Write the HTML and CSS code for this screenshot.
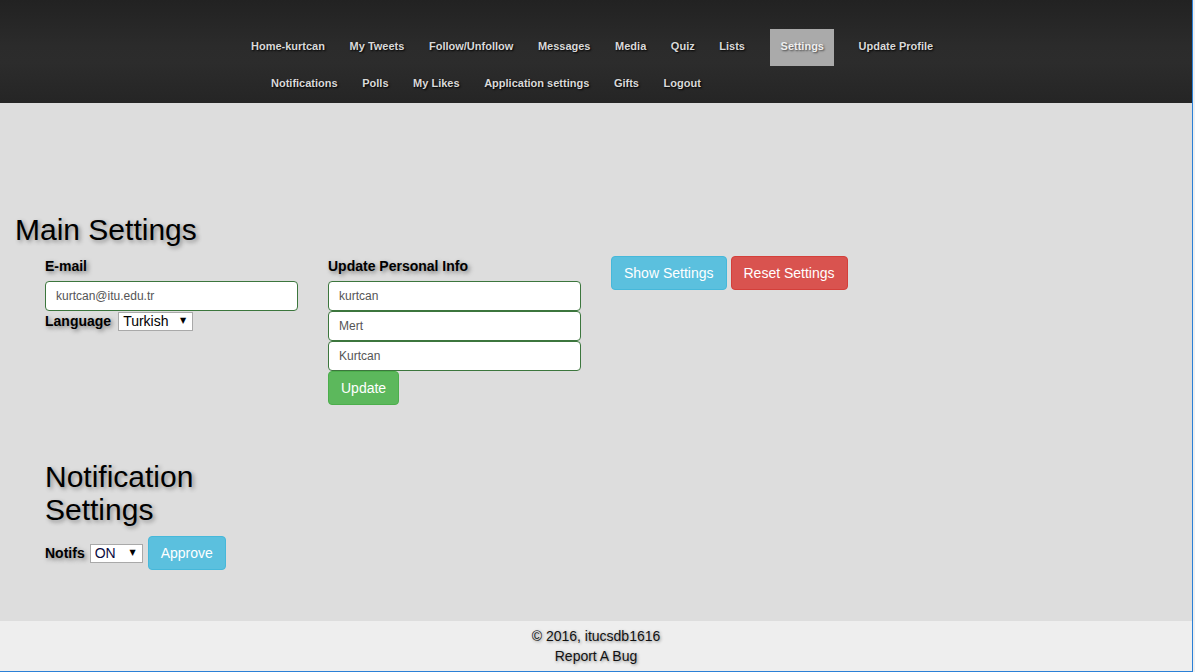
FILE: index.html
```html
<!DOCTYPE html>
<html lang="en">
<head>
<meta charset="utf-8">
<title>Settings</title>
<link rel="stylesheet" href="styles.css">
</head>
<body>
<div class="page">
  <header class="topbar">
    <nav class="nav">
      <ul class="nav-row nav-row-1">
        <li><a href="#">Home-kurtcan</a></li>
        <li><a href="#">My Tweets</a></li>
        <li><a href="#">Follow/Unfollow</a></li>
        <li><a href="#">Messages</a></li>
        <li><a href="#">Media</a></li>
        <li><a href="#">Quiz</a></li>
        <li><a href="#">Lists</a></li>
        <li class="active"><a href="#">Settings</a></li>
        <li><a href="#">Update Profile</a></li>
      </ul>
      <ul class="nav-row nav-row-2">
        <li><a href="#">Notifications</a></li>
        <li><a href="#">Polls</a></li>
        <li><a href="#">My Likes</a></li>
        <li><a href="#">Application settings</a></li>
        <li><a href="#">Gifts</a></li>
        <li><a href="#">Logout</a></li>
      </ul>
    </nav>
  </header>

  <main class="content">
    <h2 class="title">Main Settings</h2>
    <div class="settings-row">
      <div class="col">
        <label class="field-label">E-mail</label>
        <input class="text-input" type="text" value="kurtcan@itu.edu.tr">
        <div class="inline-line">
          <span class="field-label inline">Language</span>
          <span class="select-wrap select-lang"><select class="select"><option>Turkish</option></select></span>
        </div>
      </div>
      <div class="col">
        <label class="field-label">Update Personal Info</label>
        <input class="text-input" type="text" value="kurtcan">
        <input class="text-input" type="text" value="Mert">
        <input class="text-input" type="text" value="Kurtcan">
        <button class="btn btn-success">Update</button>
      </div>
      <div class="col col-buttons">
        <button class="btn btn-info">Show Settings</button>
        <button class="btn btn-danger">Reset Settings</button>
      </div>
    </div>

    <section class="notif">
      <h2 class="title notif-title">Notification Settings</h2>
      <div class="inline-line notif-line">
        <span class="field-label inline">Notifs</span>
        <span class="select-wrap select-on"><select class="select"><option>ON</option></select></span>
        <button class="btn btn-info">Approve</button>
      </div>
    </section>
  </main>

  <footer class="footer">
    <div class="footer-line">© 2016, itucsdb1616</div>
    <div class="footer-line"><a href="#" class="footer-link">Report A Bug</a></div>
  </footer>
</div>
</body>
</html>
```

FILE: styles.css
```css
* { box-sizing: border-box; }

html, body {
  margin: 0;
  padding: 0;
  background: #f0f0f0;
  font-family: "Liberation Sans", Arial, sans-serif;
}

.page {
  width: 1193px;
  height: 672px;
  border-right: 1px solid #2b80d6;
  border-bottom: 1px solid #2b80d6;
  display: flex;
  flex-direction: column;
  background: #dddddd;
  overflow: hidden;
}

/* ---------- top bar ---------- */
.topbar {
  height: 103px;
  padding-top: 29px;
  background: linear-gradient(to bottom, #222222 0%, #2b2b2b 45%, #2c2c2c 60%, #252525 100%);
  flex: none;
}

.nav-row {
  list-style: none;
  margin: 0;
  padding: 0;
  display: flex;
  height: 37px;
  gap: 4.6px;
}

.nav-row-1 { margin-left: 241px; }
.nav-row-2 { margin-left: 261px; }

.nav-row li { display: flex; }

.nav-row a {
  display: flex;
  align-items: center;
  padding: 0 10px 3px;
  font-size: 11px;
  font-weight: bold;
  color: #d9d9d9;
  text-decoration: none;
  text-shadow: 1px 1px 2px #000;
}

.nav-row li.active {
  margin: 0 9.5px 0 10.5px;
}

.nav-row li.active a {
  padding: 0 10.5px 3px;
  background: #aaaaaa;
  color: #eeeeee;
  text-shadow: 1px 1px 2px #444;
}

/* ---------- content ---------- */
.content {
  flex: 1;
  padding: 90px 15px 0;
  background: #dddddd;
}

.title {
  margin: 20px 0 10px;
  font-size: 30px;
  font-weight: normal;
  line-height: 33px;
  color: #000;
  text-shadow: 2px 2px 4px #888;
}

.settings-row {
  display: flex;
  padding-left: 15px;
}

.col {
  width: 283px;
  padding: 0 15px;
  display: flex;
  flex-direction: column;
  align-items: flex-start;
}

.col-buttons {
  flex-direction: row;
  gap: 4px;
}

.field-label {
  display: block;
  font-size: 14px;
  font-weight: bold;
  line-height: 20px;
  margin-bottom: 5px;
  color: #000;
  text-shadow: 2px 2px 4px #777;
}

.field-label.inline {
  margin-bottom: 0;
}

.text-input {
  display: block;
  width: 253px;
  height: 30px;
  margin: 0;
  padding: 0 10px;
  font-family: "Liberation Sans", Arial, sans-serif;
  font-size: 12px;
  color: #555;
  background: #fff;
  border: 1px solid #3c763d;
  border-radius: 4px;
  outline: none;
}

.inline-line {
  display: flex;
  align-items: center;
  height: 20px;
  gap: 5px;
}

.select-wrap {
  position: relative;
  display: inline-block;
  height: 19px;
}

.select-lang { width: 75px; margin-left: 2px; }
.select-on { width: 53px; }

.select {
  -webkit-appearance: none;
  appearance: none;
  width: 100%;
  height: 19px;
  margin: 0;
  padding: 0 0 0 4px;
  font-family: "Liberation Sans", Arial, sans-serif;
  font-size: 14px;
  line-height: 17px;
  color: #000;
  background: #fff;
  border: 1px solid #a9a9a9;
  border-radius: 0;
  outline: none;
}

.select-on .select { color: #0a0a40; }

.select-wrap::after {
  content: "\25BC";
  position: absolute;
  right: 7px;
  top: 4px;
  font-family: "DejaVu Sans", sans-serif;
  font-size: 8px;
  line-height: 10px;
  color: #000;
  pointer-events: none;
}

.btn {
  display: inline-block;
  height: 34px;
  padding: 6px 12px;
  font-family: "Liberation Sans", Arial, sans-serif;
  font-size: 14px;
  line-height: 20px;
  color: #fff;
  border: 1px solid transparent;
  border-radius: 4px;
  cursor: pointer;
  white-space: nowrap;
}

.btn-success { background: #5cb85c; border-color: #4cae4c; }
.btn-info { background: #5bc0de; border-color: #46b8da; }
.btn-danger { background: #d9534f; border-color: #d43f3a; }

.notif {
  padding-top: 35px;
  padding-left: 30px;
  width: 283px;
}

.notif-title {
  width: 253px;
  margin-bottom: 10px;
}

.notif-line {
  height: 34px;
  gap: 5px;
}

/* ---------- footer ---------- */
.footer {
  flex: none;
  height: 50px;
  padding-top: 5px;
  background: #eeeeee;
  text-align: center;
}

.footer-line {
  font-size: 14px;
  line-height: 20px;
  color: #111;
  text-shadow: 1px 1px 3px #888;
}

.footer-link {
  color: #111;
  text-decoration: none;
}
```
